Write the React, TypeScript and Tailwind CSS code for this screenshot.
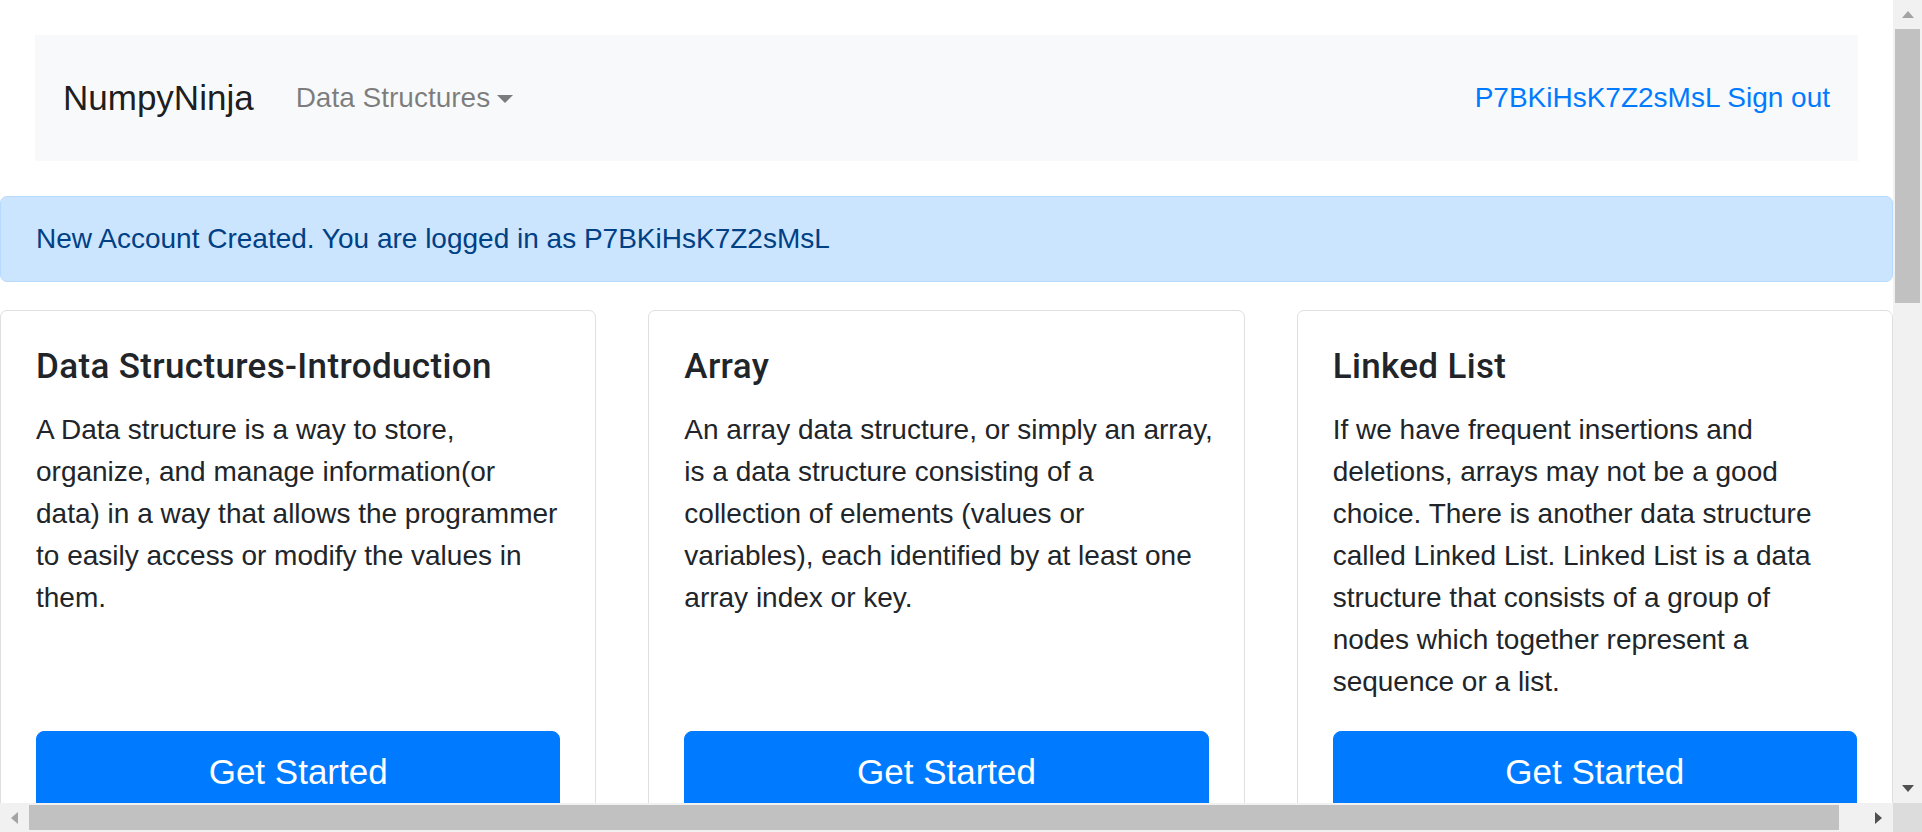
import React from "react";

type Topic = { title: string; lines: string[] };

const topics: Topic[] = [
    {
        title: "Data Structures-Introduction",
        lines: [
            "A Data structure is a way to store,",
            "organize, and manage information(or",
            "data) in a way that allows the programmer",
            "to easily access or modify the values in",
            "them.",
        ],
    },
    {
        title: "Array",
        lines: [
            "An array data structure, or simply an array,",
            "is a data structure consisting of a",
            "collection of elements (values or",
            "variables), each identified by at least one",
            "array index or key.",
        ],
    },
    {
        title: "Linked List",
        lines: [
            "If we have frequent insertions and",
            "deletions, arrays may not be a good",
            "choice. There is another data structure",
            "called Linked List. Linked List is a data",
            "structure that consists of a group of",
            "nodes which together represent a",
            "sequence or a list.",
        ],
    },
];

function TopicCard({ topic }: { topic: Topic }) {
    return (
        <div className="flex flex-col bg-white border border-[#dfdfdf] rounded-[7px] p-[35px]">
            <h5 className="font-['Roboto',sans-serif] font-medium text-[35px] leading-[42px] tracking-[0.01em] mb-[21px] text-[#212529]">
                {topic.title}
            </h5>
            <p className="text-[28px] leading-[42px] mb-[28px] whitespace-nowrap">
                {topic.lines.map((line, i) => (
                    <React.Fragment key={i}>
                        {line}
                        {i < topic.lines.length - 1 && <br />}
                    </React.Fragment>
                ))}
            </p>
            <button className="mt-auto w-full bg-[#007bff] border border-[#007bff] text-white text-[35px] leading-[52px] py-[14px] rounded-[8px]">
                Get Started
            </button>
        </div>
    );
}

function VerticalScrollbar() {
    return (
        <div className="w-[29px] h-full bg-[#f1f1f1] flex flex-col items-center">
            <div className="h-[29px] w-full flex items-center justify-center">
                <div className="w-0 h-0 border-x-[6.5px] border-x-transparent border-b-[7px] border-b-[#a3a3a3]" />
            </div>
            <div className="w-[25px] h-[274px] bg-[#c1c1c1]" />
            <div className="flex-1" />
            <div className="h-[29px] w-full flex items-center justify-center">
                <div className="w-0 h-0 border-x-[6.5px] border-x-transparent border-t-[7px] border-t-[#505050]" />
            </div>
        </div>
    );
}

function HorizontalScrollbar() {
    return (
        <div className="flex h-[29px]">
            <div className="w-[1893px] h-full bg-[#f1f1f1] flex items-center">
                <div className="w-[29px] h-full flex items-center justify-center">
                    <div className="w-0 h-0 border-y-[6.5px] border-y-transparent border-r-[7px] border-r-[#a3a3a3]" />
                </div>
                <div className="w-[1810px] h-[25px] bg-[#c1c1c1]" />
                <div className="flex-1" />
                <div className="w-[29px] h-full flex items-center justify-center">
                    <div className="w-0 h-0 border-y-[6.5px] border-y-transparent border-l-[7px] border-l-[#505050]" />
                </div>
            </div>
            <div className="w-[29px] h-full bg-[#dcdcdc]" />
        </div>
    );
}

export default function App() {
    return (
        <div className="w-[1922px] h-[832px] overflow-hidden bg-white flex flex-col font-['Liberation_Sans',Arial,sans-serif] text-[#212529]">
            <div className="flex h-[803px]">
                <div className="w-[1893px] h-full overflow-hidden">
                    <div className="pt-[35px] px-[35px]">
                        <nav className="h-[126px] bg-[#f8f9fa] px-[28px] flex items-center justify-between">
                            <div className="flex items-center">
                                <span className="text-[35px] leading-[52px] text-black/90 mr-[28px]">NumpyNinja</span>
                                <span className="px-[14px] text-[28px] leading-[42px] text-black/50 flex items-center">
                                    Data Structures
                                    <span className="ml-[7px] mt-[2px] w-0 h-0 border-x-[8px] border-x-transparent border-t-[8px] border-t-black/50" />
                                </span>
                            </div>
                            <div className="text-[28px] leading-[42px] text-[#007bff]">
                                <span>P7BKiHsK7Z2sMsL</span> <span>Sign out</span>
                            </div>
                        </nav>
                    </div>
                    <div className="mt-[35px] bg-[#cce5ff] border border-[#b8daff] rounded-[7px] px-[35px] py-[21px] text-[28px] leading-[42px] text-[#004085]">
                        New Account Created. You are logged in as P7BKiHsK7Z2sMsL
                    </div>
                    <div className="mt-[28px] grid grid-cols-3 gap-[52px]">
                        {topics.map((t) => (
                            <TopicCard key={t.title} topic={t} />
                        ))}
                    </div>
                </div>
                <VerticalScrollbar />
            </div>
            <HorizontalScrollbar />
        </div>
    );
}
